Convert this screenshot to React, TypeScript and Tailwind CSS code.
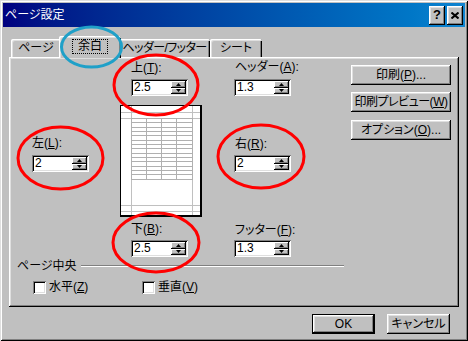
import React from "react";

const FONT = "font-['Liberation_Sans','Noto_Sans_CJK_JP',sans-serif] [font-feature-settings:'palt']";
const RAISED =
  "shadow-[inset_-1px_-1px_#000,inset_1px_1px_#fff,inset_-2px_-2px_#808080,inset_2px_2px_#dfdfdf]";
const SUNKEN =
  "shadow-[inset_1px_1px_#808080,inset_-1px_-1px_#fff,inset_2px_2px_#000,inset_-2px_-2px_#dfdfdf]";

function U({ c }: { c: string }) {
  return <span className="underline underline-offset-[1px]">{c}</span>;
}

function SpinBtn({ up }: { up?: boolean }) {
  return (
    <div className="flex-1 bg-[#c0c0c0] flex items-center justify-center shadow-[inset_-1px_-1px_#000,inset_1px_1px_#fff,inset_-2px_-2px_#808080]">
      <svg width="5" height="3" viewBox="0 0 5 3">
        {up ? <path d="M2.5 0 L5 3 L0 3 Z" fill="#000" /> : <path d="M0 0 L5 0 L2.5 3 Z" fill="#000" />}
      </svg>
    </div>
  );
}

function Spin({ value }: { value: string }) {
  return (
    <div className={`w-[57px] h-[17px] bg-white flex p-[2px] ${SUNKEN}`}>
      <div className="flex-1 text-[12px] leading-[13px] pl-[1px] text-black">{value}</div>
      <div className="w-[15px] flex flex-col">
        <SpinBtn up />
        <SpinBtn />
      </div>
    </div>
  );
}

function Label({ children, cls = "" }: { children: React.ReactNode; cls?: string }) {
  return <div className={`h-[14px] leading-[14px] text-[12px] text-black whitespace-nowrap ${cls}`}>{children}</div>;
}

function Btn({ children, cls = "" }: { children: React.ReactNode; cls?: string }) {
  return (
    <div className={`bg-[#c0c0c0] flex items-center justify-center text-[12px] text-black whitespace-nowrap ${RAISED} ${cls}`}>
      {children}
    </div>
  );
}

function Preview() {
  const rows = [13, 17, 22, 26, 30, 35, 39, 43, 48, 52, 56, 61, 65, 69, 74];
  const cols = [11, 26, 41, 56, 72];
  return (
    <svg width="83" height="113" viewBox="0 0 83 113" className="block">
      <rect x="0" y="0" width="82" height="112" fill="#000" />
      <rect x="1" y="1" width="79" height="109" fill="#fff" />
      <line x1="11.5" y1="1" x2="11.5" y2="110" stroke="#c0c0c0" />
      <line x1="72.5" y1="1" x2="72.5" y2="110" stroke="#c0c0c0" />
      <line x1="1" y1="7.5" x2="80" y2="7.5" stroke="#c0c0c0" />
      <line x1="1" y1="13.5" x2="80" y2="13.5" stroke="#c0c0c0" />
      <line x1="1" y1="100.5" x2="80" y2="100.5" stroke="#c0c0c0" />
      <line x1="1" y1="106.5" x2="80" y2="106.5" stroke="#c0c0c0" />
      {rows.map((y) => (
        <line key={"r" + y} x1="11" y1={y + 0.5} x2="73" y2={y + 0.5} stroke="#b0b0b0" />
      ))}
      {cols.map((x) => (
        <line key={"c" + x} x1={x + 0.5} y1="13" x2={x + 0.5} y2="75" stroke="#b0b0b0" />
      ))}
    </svg>
  );
}

function Check({ children }: { children: React.ReactNode }) {
  return (
    <div className="flex items-center">
      <div className={`w-[13px] h-[13px] bg-white ${SUNKEN}`} />
      <div className="ml-[3px] text-[12px] leading-[14px] text-black whitespace-nowrap">{children}</div>
    </div>
  );
}

export default function App() {
  const tabBase =
    "h-[18px] bg-[#c0c0c0] flex items-center justify-center text-[12px] text-black whitespace-nowrap rounded-t-[2px] shadow-[inset_1px_1px_#fff,inset_2px_2px_#dfdfdf,inset_-1px_0_#000,inset_-2px_0_#808080]";
  return (
    <div className={`relative w-[468px] h-[341px] bg-[#c0c0c0] p-[3px] overflow-hidden shadow-[inset_1px_1px_#dfdfdf,inset_-1px_-1px_#000,inset_2px_2px_#fff,inset_-2px_-2px_#808080] ${FONT}`}>
      {/* title bar */}
      <div className="h-[24px] bg-linear-to-r from-[#000080] to-[#1084d0] flex items-center pl-[2px] pr-[2px]">
        <div className="text-white text-[12px] leading-[14px] flex-1">ページ設定</div>
        <div className={`w-[16px] h-[19px] bg-[#c0c0c0] flex items-center justify-center text-[13px] font-bold text-black ${RAISED}`}>?</div>
        <div className={`ml-[2px] w-[16px] h-[19px] bg-[#c0c0c0] flex items-center justify-center ${RAISED}`}>
          <svg width="8" height="7" viewBox="0 0 8 7">
            <path d="M0.5 0.5 L7.5 6.5 M7.5 0.5 L0.5 6.5" stroke="#000" strokeWidth="2" />
          </svg>
        </div>
      </div>

      {/* tabs */}
      <div className="mt-[8px] h-[22px] pl-[8px] flex items-end relative z-10">
        <div className={`${tabBase} w-[50px]`}>ページ</div>
        <div className={`${tabBase} relative top-[1px] -mx-[2px] w-[62px] h-[22px] pb-[1px]`}>
          <span className="outline-1 outline-dotted outline-black px-[5px] leading-[13px]">余白</span>
        </div>
        <div className={`${tabBase} w-[91px] tracking-[-0.6px]`}>ヘッダー/フッター</div>
        <div className={`${tabBase} w-[52px]`}>シート</div>
      </div>

      {/* panel */}
      <div className={`ml-[6px] w-[450px] h-[250px] bg-[#c0c0c0] ${RAISED} flex flex-col`}>
        <div className="flex pl-[23px]">
          {/* left */}
          <div className="w-[57px] mt-[79px] flex flex-col">
            <Label>
              左(<U c="L" />):
            </Label>
            <div className="mt-[5px]">
              <Spin value="2" />
            </div>
          </div>
          {/* center */}
          <div className="ml-[31px] w-[83px] flex flex-col">
            <Label cls="mt-[4px] pl-[11px]">
              上(<U c="T" />):
            </Label>
            <div className="mt-[4px] pl-[11px]">
              <Spin value="2.5" />
            </div>
            <div className="mt-[9px]">
              <Preview />
            </div>
            <Label cls="mt-[4px] pl-[11px]">
              下(<U c="B" />):
            </Label>
            <div className="mt-[4px] pl-[11px]">
              <Spin value="2.5" />
            </div>
          </div>
          {/* right */}
          <div className="ml-[31px] w-[57px] flex flex-col">
            <Label cls="mt-[3px] pl-[1px]">
              ヘッダー(<U c="A" />):
            </Label>
            <div className="mt-[5px]">
              <Spin value="1.3" />
            </div>
            <Label cls="mt-[41px] pl-[1px]">
              右(<U c="R" />):
            </Label>
            <div className="mt-[4px]">
              <Spin value="2" />
            </div>
            <Label cls="mt-[51px] pl-[1px]">
              フッター(<U c="F" />):
            </Label>
            <div className="mt-[3px]">
              <Spin value="1.3" />
            </div>
          </div>
          {/* buttons */}
          <div className="ml-[60px] w-[100px] flex flex-col">
            <Btn cls="mt-[8px] h-[20px]">
              印刷(<U c="P" />)...
            </Btn>
            <Btn cls="mt-[7px] h-[20px] tracking-[-0.5px]">
              印刷プレビュー(<U c="W" />)
            </Btn>
            <Btn cls="mt-[8px] h-[20px]">
              オプション(<U c="O" />)...
            </Btn>
          </div>
        </div>

        {/* group */}
        <div className="mt-[2px] ml-[8px] w-[327px] flex items-center">
          <div className="text-[12px] leading-[14px] text-black whitespace-nowrap">ページ中央</div>
          <div className="ml-[4px] flex-1 h-[2px] border-t border-t-[#808080] border-b border-b-white" />
        </div>
        <div className="mt-[7px] pl-[24px] flex">
          <div className="w-[109px]">
            <Check>
              水平(<U c="Z" />)
            </Check>
          </div>
          <Check>
            垂直(<U c="V" />)
          </Check>
        </div>
      </div>

      {/* bottom buttons */}
      <div className="mt-[7px] pl-[309px] flex gap-[12px]">
        <div className="w-[63px] h-[20px] border border-black">
          <Btn cls="w-full h-full">OK</Btn>
        </div>
        <Btn cls="w-[63px] h-[20px]">キャンセル</Btn>
      </div>

      {/* annotations */}
      <svg className="absolute inset-0 pointer-events-none z-20" width="468" height="341" viewBox="0 0 468 341">
        <ellipse cx="91.5" cy="47" rx="30" ry="20" fill="none" stroke="#1fa0c8" strokeWidth="3" />
        <ellipse cx="156" cy="85" rx="42" ry="30" fill="none" stroke="#ff0000" strokeWidth="3" />
        <ellipse cx="60.5" cy="158" rx="42.5" ry="31" fill="none" stroke="#ff0000" strokeWidth="3" />
        <ellipse cx="261" cy="156.5" rx="43" ry="31.5" fill="none" stroke="#ff0000" strokeWidth="3" />
        <ellipse cx="156" cy="242.5" rx="43" ry="29.5" fill="none" stroke="#ff0000" strokeWidth="3" />
      </svg>
    </div>
  );
}
